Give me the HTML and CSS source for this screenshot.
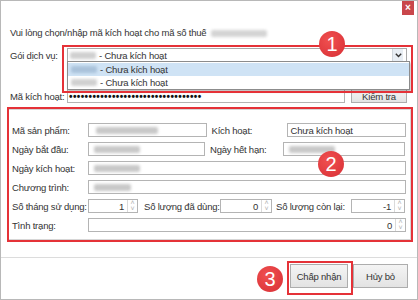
FILE: index.html
```html
<!DOCTYPE html>
<html lang="vi">
<head>
    <meta charset="UTF-8">
    <meta name="viewport" content="width=device-width, initial-scale=1.0">
    <title>Kích hoạt</title>
    <link rel="stylesheet" href="styles.css">
</head>
<body>

    <div class="dialog">
        <div class="title-bar">
            <span class="close-btn">×</span>
        </div>

        <p class="intro">Vui lòng chọn/nhập mã kích hoạt cho mã số thuế <span class="blur blur-tax"></span></p>

        <div class="line">
            <label class="line-label">Gói dịch vụ:</label>
            <div class="select">
                <span class="blur blur-code"></span>
                <span>- Chưa kích hoạt</span>
                <span class="select-arrow">
                    <svg width="7" height="5" viewBox="0 0 7 5"><path d="M0.8 0.8 L3.5 3.6 L6.2 0.8" fill="none" stroke="#333" stroke-width="1.4"/></svg>
                </span>
            </div>
        </div>

        <!-- open list of the select -->
        <ul class="options">
            <li class="option selected"><span class="blur blur-code blur-blue"></span>- Chưa kích hoạt</li>
            <li class="option"><span class="blur blur-code"></span>- Chưa kích hoạt</li>
        </ul>

        <div class="line line-key">
            <label class="line-label">Mã kích hoạt:</label>
            <div class="input input-key">••••••••••••••••••••••••••••••••••</div>
            <button class="btn btn-check">Kiểm tra</button>
        </div>

        <div class="group">
            <div class="row">
                <label class="lbl">Mã sản phẩm:</label>
                <div class="input w-half"><span class="blur blur-product"></span></div>
                <label class="lbl lbl-right">Kích hoạt:</label>
                <div class="input w-right">Chưa kích hoạt</div>
            </div>
            <div class="row">
                <label class="lbl">Ngày bắt đầu:</label>
                <div class="input w-half w-short"><span class="blur blur-date"></span></div>
                <label class="lbl lbl-right">Ngày hết hạn:</label>
                <div class="input w-right w-long"><span class="blur blur-date"></span></div>
            </div>
            <div class="row">
                <label class="lbl">Ngày kích hoạt:</label>
                <div class="input w-full"><span class="blur blur-date"></span></div>
            </div>
            <div class="row">
                <label class="lbl">Chương trình:</label>
                <div class="input w-full"><span class="blur blur-program"></span></div>
            </div>
            <div class="row">
                <label class="lbl">Số tháng sử dụng:</label>
                <div class="spin w-spin1"><span class="spin-val">1</span><span class="spin-btns"><i>˄</i><i>˅</i></span></div>
                <label class="lbl lbl-used">Số lượng đã dùng:</label>
                <div class="spin w-spin2"><span class="spin-val">0</span><span class="spin-btns"><i>˄</i><i>˅</i></span></div>
                <label class="lbl lbl-left">Số lượng còn lại:</label>
                <div class="spin w-spin3"><span class="spin-val">-1</span><span class="spin-btns"><i>˄</i><i>˅</i></span></div>
            </div>
            <div class="row">
                <label class="lbl">Tình trạng:</label>
                <div class="spin w-full"><span class="spin-val">0</span><span class="spin-btns"><i>˄</i><i>˅</i></span></div>
            </div>
        </div>

        <div class="footer">
            <button class="btn btn-footer btn-ok">Chấp nhận</button>
            <button class="btn btn-footer btn-cancel">Hủy bỏ</button>
        </div>

        <!-- annotations -->
        <div class="mark mark-1"></div>
        <div class="mark mark-2"></div>
        <div class="mark mark-3"></div>
        <span class="badge badge-1">1</span>
        <span class="badge badge-2">2</span>
        <span class="badge badge-3">3</span>
    </div>

</body>
</html>
```

FILE: styles.css
```css
body {
    margin: 0;
    font-family: "Liberation Sans", Arial, sans-serif;
    font-size: 9.5px;
    letter-spacing: -0.2px;
    color: #333;
    background-color: #fff;
}

.dialog {
    position: relative;
    width: 418px;
    height: 300px;
    box-sizing: border-box;
    border: 1px solid #b8b8b8;
    background-color: #fff;
}

.title-bar {
    height: 16px;
    display: flex;
    justify-content: flex-end;
    padding-right: 3px;
}

.close-btn {
    width: 12px;
    height: 14px;
    background-color: #c9464b;
    color: #fff;
    font-size: 10px;
    font-weight: bold;
    line-height: 13px;
    text-align: center;
    letter-spacing: 0;
}

.intro {
    margin: 9px 0 0 9px;
    height: 14px;
    line-height: 14px;
    display: flex;
    align-items: center;
}

.blur {
    display: inline-block;
    height: 7px;
    background-color: #c8c8c8;
    border-radius: 2px;
    filter: blur(1.5px);
}

.blur-tax {
    width: 56px;
    margin-left: 5px;
    background-color: #d4d4d4;
}

.blur-code {
    width: 26px;
    margin-right: 3px;
    background-color: #d0d0d0;
}

.blur-blue {
    background-color: #a9c2da;
}

.blur-product {
    width: 62px;
    margin-left: 4px;
}

.blur-date {
    width: 46px;
    margin-left: 2px;
}

.blur-program {
    width: 37px;
    margin-left: 2px;
}

.line {
    display: flex;
    align-items: center;
    margin-top: 8px;
    padding-left: 9px;
    height: 14px;
}

.line-key {
    margin-top: 27px;
}

.line-label {
    width: 57px;
    white-space: nowrap;
}

.select {
    width: 340px;
    height: 14px;
    box-sizing: border-box;
    border: 1px solid #a9a9a9;
    display: flex;
    align-items: center;
    padding-left: 2px;
}

.select-arrow {
    margin-left: auto;
    width: 10px;
    height: 12px;
    margin-right: 3px;
    background-color: #e8eef4;
    border-left: 1px solid #d0d6dc;
    display: flex;
    align-items: center;
    justify-content: center;
}

.options {
    position: absolute;
    left: 66px;
    top: 60px;
    width: 341px;
    margin: 0;
    padding: 1px 0 0;
    list-style: none;
    border: 1px solid #8c8c8c;
    background-color: #fff;
    box-shadow: 1px 2px 2px rgba(0, 0, 0, 0.25);
    z-index: 2;
}

.option {
    height: 13px;
    display: flex;
    align-items: center;
    padding-left: 3px;
}

.option.selected {
    background-color: #cfe3f5;
}

.input,
.spin {
    height: 14px;
    box-sizing: border-box;
    border: 1px solid #b4b4b4;
    background-color: #fff;
    display: flex;
    align-items: center;
    padding-left: 3px;
}

.input-key {
    width: 278px;
    letter-spacing: 0.4px;
    color: #111;
    font-size: 10px;
    font-weight: bold;
    overflow: hidden;
    white-space: nowrap;
    padding-left: 1px;
}

.btn {
    font-family: inherit;
    font-size: 9.5px;
    letter-spacing: -0.2px;
    color: #333;
    border: 1px solid #adadad;
    background: linear-gradient(#f4f4f4, #e3e3e3);
    padding: 0;
    cursor: pointer;
}

.btn-check {
    width: 56px;
    height: 14px;
    margin-left: 6px;
}

.group {
    margin: 6px 6px 0 6px;
    height: 131px;
    box-sizing: border-box;
    border: 1px solid #d6d6d6;
    padding: 13px 4px 0 4px;
    display: flex;
    flex-direction: column;
    gap: 5px;
}

.row {
    display: flex;
    align-items: center;
    height: 14px;
}

.lbl {
    width: 76px;
    flex-shrink: 0;
    white-space: nowrap;
}

.lbl-right {
    width: 80px;
    padding-left: 5px;
    box-sizing: border-box;
}

.w-half {
    width: 119px;
}

.w-short {
    width: 117px;
}

.w-right {
    width: 120px;
}

.w-long {
    width: 122px;
    margin-left: -2px;
}

.w-full {
    width: 318px;
}

.spin {
    justify-content: flex-end;
    padding: 0;
}

.spin-val {
    padding-right: 3px;
}

.spin-btns {
    width: 9px;
    height: 12px;
    border-left: 1px solid #dadada;
    display: flex;
    flex-direction: column;
    align-items: center;
    color: #b0b0b0;
    font-size: 7px;
    line-height: 6px;
}

.spin-btns i {
    font-style: normal;
    height: 6px;
}

.w-spin1 {
    width: 50px;
}

.lbl-used {
    width: 82px;
    padding-left: 6px;
    box-sizing: border-box;
}

.w-spin2 {
    width: 52px;
}

.lbl-left {
    width: 79px;
    padding-left: 4px;
    box-sizing: border-box;
}

.w-spin3 {
    width: 54px;
}

.footer {
    margin-top: 17px;
    border-top: 1px solid #dcdcdc;
    display: flex;
    justify-content: flex-end;
    gap: 5px;
    padding: 6px 9px 0 0;
}

.btn-footer {
    height: 24px;
}

.btn-ok {
    width: 58px;
}

.btn-cancel {
    width: 55px;
}

/* red annotation frames and numbers */
.mark {
    position: absolute;
    border: 2px solid #e53238;
    z-index: 3;
}

.mark-1 {
    left: 61px;
    top: 44px;
    width: 347px;
    height: 44px;
}

.mark-2 {
    left: 6px;
    top: 106px;
    width: 402px;
    height: 131px;
}

.mark-3 {
    left: 286px;
    top: 260px;
    width: 62px;
    height: 30px;
}

.badge {
    position: absolute;
    width: 26px;
    height: 26px;
    border-radius: 50%;
    background: radial-gradient(circle at 40% 35%, #f05050, #d82f35);
    color: #fff;
    font-size: 20px;
    letter-spacing: 0;
    line-height: 26px;
    text-align: center;
    z-index: 4;
}

.badge-1 {
    left: 318px;
    top: 30px;
}

.badge-2 {
    left: 317px;
    top: 150px;
}

.badge-3 {
    left: 256px;
    top: 265px;
}
```
